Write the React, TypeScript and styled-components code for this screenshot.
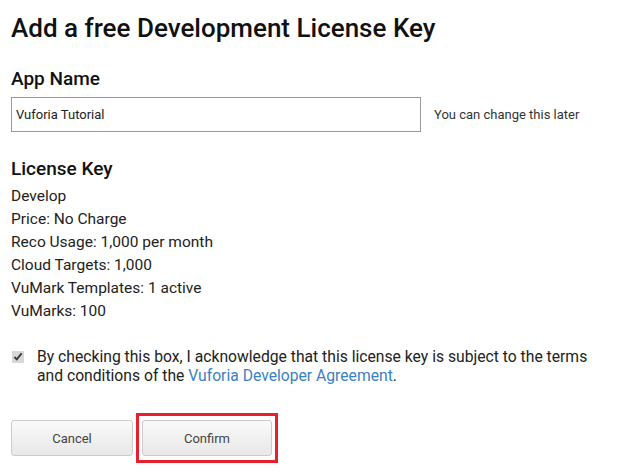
import React from "react";
import styled, { createGlobalStyle } from "styled-components";

const Global = createGlobalStyle`
  html, body { margin: 0; padding: 0; background: #fff; }
  body { font-family: Roboto, "Liberation Sans", sans-serif; color: #1a1a1a; }
`;

const Page = styled.div`
  width: 619px;
  height: 475px;
  box-sizing: border-box;
  padding: 12px 0 0 11px;
  display: flex;
  flex-direction: column;
`;

const Title = styled.h1`
  margin: 0;
  font-family: Roboto, sans-serif;
  font-weight: 500;
  font-size: 26px;
  line-height: 32px;
  color: #111;
`;

const SectionTitle = styled.h2<{ $top: number }>`
  margin: ${(p) => p.$top}px 0 0;
  font-family: Roboto, sans-serif;
  font-weight: 500;
  font-size: 19px;
  line-height: 24px;
  color: #111;
`;

const FieldRow = styled.div`
  display: flex;
  align-items: center;
  margin-top: 6px;
`;

const NameInput = styled.input`
  width: 410px;
  height: 35px;
  box-sizing: border-box;
  border: 1px solid #9a9a9a;
  padding: 0 4px;
  font-family: Roboto, sans-serif;
  font-size: 13px;
  color: #222;
  outline: none;
`;

const Hint = styled.span`
  margin-left: 13px;
  font-family: Roboto, sans-serif;
  font-size: 13px;
  color: #333;
`;

const Specs = styled.ul`
  list-style: none;
  margin: 4px 0 0;
  padding: 0;
`;

const Spec = styled.li`
  font-family: Roboto, sans-serif;
  font-size: 15.5px;
  line-height: 23px;
  color: #222;
`;

const Agreement = styled.label`
  display: flex;
  align-items: flex-start;
  margin-top: 24px;
`;

const Check = styled.input`
  margin: 4px 13px 0 1px;
  width: 12px;
  height: 12px;
  flex: none;
  accent-color: #d8d8d8;
`;

const AgreeText = styled.p`
  margin: 0;
  max-width: 562px;
  font-family: Roboto, sans-serif;
  font-size: 15.7px;
  line-height: 19px;
  color: #222;
`;

const Link = styled.a`
  color: #3b7fc4;
  text-decoration: none;
`;

const Actions = styled.div`
  display: flex;
  align-items: center;
  margin-top: 28px;
  gap: 3px;
`;

const Highlight = styled.div`
  border: 3px solid #e8202d;
  padding: 4px 3px;
  display: flex;
`;

const Button = styled.button<{ $w: number }>`
  width: ${(p) => p.$w}px;
  height: 36px;
  box-sizing: border-box;
  border: 1px solid #cbcbcb;
  border-radius: 3px;
  background: linear-gradient(#fafafa, #e8e8e8);
  font-family: Roboto, sans-serif;
  font-size: 13px;
  color: #444;
  cursor: pointer;
`;

export default function App() {
  return (
    <>
      <Global />
      <Page>
        <Title>Add a free Development License Key</Title>
        <SectionTitle $top={23}>App Name</SectionTitle>
        <FieldRow>
          <NameInput defaultValue="Vuforia Tutorial" />
          <Hint>You can change this later</Hint>
        </FieldRow>
        <SectionTitle $top={25}>License Key</SectionTitle>
        <Specs>
          <Spec>Develop</Spec>
          <Spec>Price: No Charge</Spec>
          <Spec>Reco Usage: 1,000 per month</Spec>
          <Spec>Cloud Targets: 1,000</Spec>
          <Spec>VuMark Templates: 1 active</Spec>
          <Spec>VuMarks: 100</Spec>
        </Specs>
        <Agreement>
          <Check type="checkbox" defaultChecked />
          <AgreeText>
            By checking this box, I acknowledge that this license key is subject to the terms and
            conditions of the <Link href="#">Vuforia Developer Agreement</Link>.
          </AgreeText>
        </Agreement>
        <Actions>
          <Button $w={122}>Cancel</Button>
          <Highlight>
            <Button $w={130}>Confirm</Button>
          </Highlight>
        </Actions>
      </Page>
    </>
  );
}
